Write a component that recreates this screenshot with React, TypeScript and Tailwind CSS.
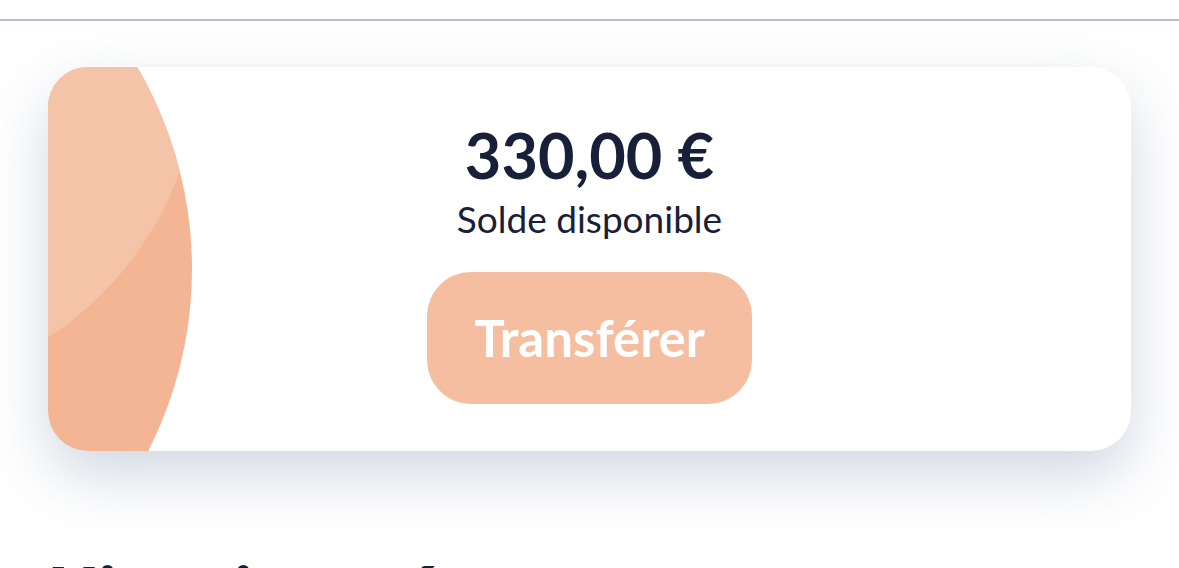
import React from 'react';

function CardDecoration() {
  return (
    <svg className="absolute left-0 top-0 h-full w-[200px]" viewBox="0 0 200 384" preserveAspectRatio="xMinYMin slice">
      <defs>
        <clipPath id="bigBlob">
          <circle cx={-256} cy={202} r={400} />
        </clipPath>
      </defs>
      <circle cx={-256} cy={202} r={400} fill="#f4b595" />
      <circle cx={-183} cy={-10} r={335} fill="#f5c3a7" clipPath="url(#bigBlob)" />
    </svg>
  );
}

export default function App() {
  const amount = '330,00 €';

  return (
    <div className="min-h-screen bg-white" style={{ fontFamily: 'Lato, "Open Sans", sans-serif' }}>
      <header className="h-[21px] border-b-2 border-[#b8bccb] bg-white" />

      <main className="px-12 pt-[46px]">
        <div className="relative overflow-hidden rounded-[40px] bg-white shadow-[0_24px_60px_rgba(90,110,150,0.28)]">
          <CardDecoration />
          <div className="relative flex h-[384px] flex-col items-center pt-[50px] text-[#172038]">
            <div className="text-[63px] font-bold leading-[76px]">{amount}</div>
            <div className="mt-[4px] text-[37px] leading-[44px]">Solde disponible</div>
            <button className="mt-[31px] flex h-[132px] w-[325px] items-center justify-center rounded-[44px] bg-[#f5bea0] text-[51px] font-bold text-white">
              Transférer
            </button>
          </div>
        </div>

        <h2 className="mt-[106px] text-[66px] font-extrabold leading-none text-[#172038]">Historique récent</h2>
      </main>
    </div>
  );
}
